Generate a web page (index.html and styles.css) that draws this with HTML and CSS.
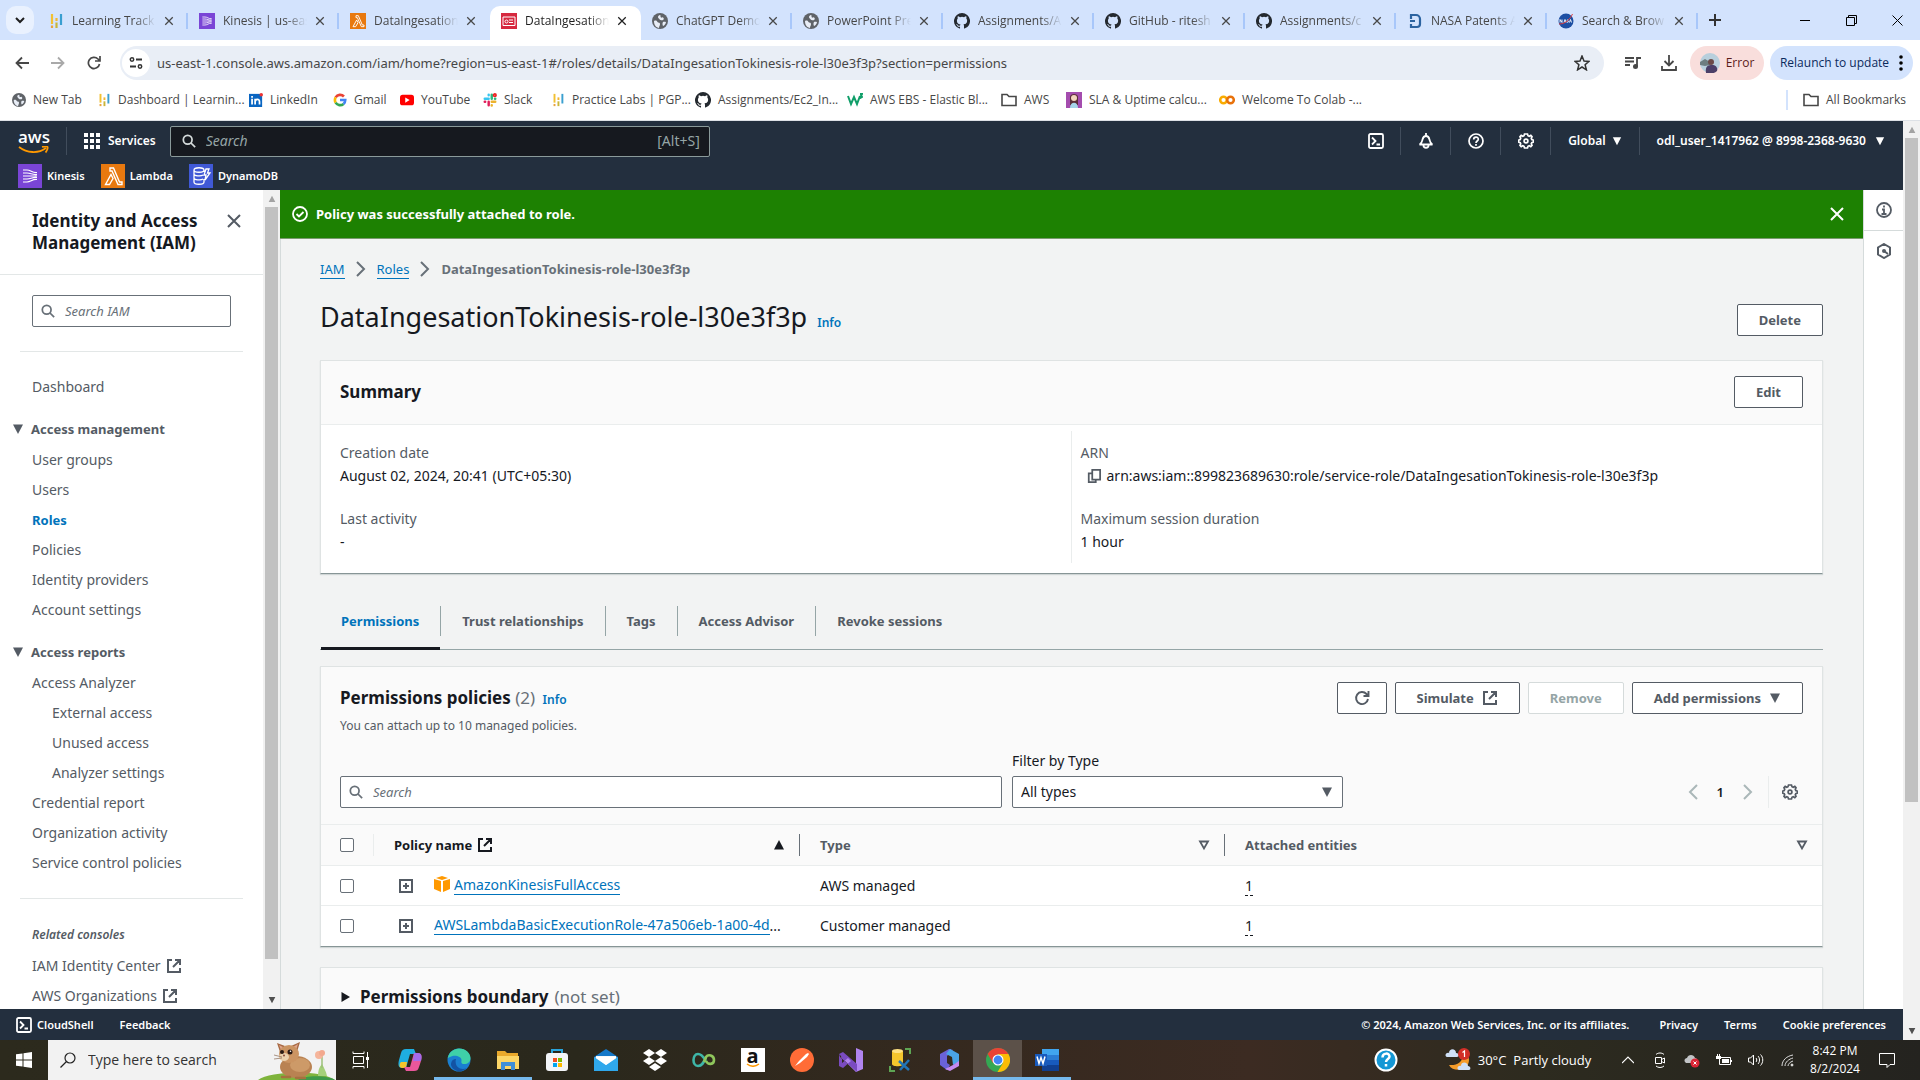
FILE: index.html
```html
<!DOCTYPE html>
<html lang="en">
<head>
<meta charset="utf-8">
<meta name="viewport" content="width=device-width, initial-scale=1">
<title>DataIngesationTokinesis-role-l30e3f3p | IAM</title>
<link rel="stylesheet" href="styles.css">
</head>
<body>
<svg class="sprite" aria-hidden="true">
  <symbol id="x" viewBox="0 0 16 16"><path d="M2 2l12 12M14 2L2 14" fill="none" stroke="currentColor" stroke-width="2"/></symbol>
  <symbol id="search" viewBox="0 0 16 16"><circle cx="6.5" cy="6.5" r="5" fill="none" stroke="currentColor" stroke-width="2"/><path d="M10 10l5 5" stroke="currentColor" stroke-width="2"/></symbol>
  <symbol id="down" viewBox="0 0 12 12"><path d="M1 1.500h10L6 11z" fill="currentColor"/></symbol>
  <symbol id="downo" viewBox="0 0 12 12"><path d="M2 2.500h8L6 9.500z" fill="none" stroke="currentColor" stroke-width="1.800"/></symbol>
  <symbol id="up" viewBox="0 0 12 12"><path d="M1 10.500h10L6 1z" fill="currentColor"/></symbol>
  <symbol id="right" viewBox="0 0 12 12"><path d="M1.500 1v10L10 6z" fill="currentColor"/></symbol>
  <symbol id="chev" viewBox="0 0 16 16"><path d="M4 1l7 7-7 7" fill="none" stroke="currentColor" stroke-width="2"/></symbol>
  <symbol id="ext" viewBox="0 0 16 16"><path d="M6 2H2v12h12v-4M9 2h5v5M14 2L7 9" fill="none" stroke="currentColor" stroke-width="2"/></symbol>
  <symbol id="gear" viewBox="0 0 16 16"><path d="M6.500 1h3l.5 1.700 1.200.5 1.600-.8 1.200 1.300-.7 1.600.5 1.200 1.700.6v1.900l-1.700.6-.5 1.200.7 1.500-1.200 1.300-1.600-.8-1.200.5-.5 1.700h-3L6 13.300l-1.200-.5-1.600.8L2 12.300l.7-1.500-.5-1.200L.500 9V7.100l1.700-.6.5-1.200L2 3.700l1.200-1.300 1.600.8L6 2.700z" fill="none" stroke="currentColor" stroke-width="1.700"/><circle cx="8" cy="8" r="1.900" fill="none" stroke="currentColor" stroke-width="1.700"/></symbol>
  <symbol id="shell" viewBox="0 0 16 16"><rect x="1" y="1" width="14" height="14" rx="1.500" fill="none" stroke="currentColor" stroke-width="1.800"/><path d="M4 4.500L7.500 8 4 11.500M8.500 11.500H12" fill="none" stroke="currentColor" stroke-width="1.800"/></symbol>
  <symbol id="plusbox" viewBox="0 0 16 16"><path d="M2 2h12v12H2zM8 5v6M5 8h6" fill="none" stroke="currentColor" stroke-width="2"/></symbol>
  <symbol id="globe" viewBox="0 0 16 16"><circle cx="8" cy="8" r="8" fill="#5f6368"/><path d="M2 8c2-1 3 0 3.500 1S8 9 8 11s-1 2-1 4C3 14 2 11 2 8zM8 2c1 0 0 2 1 2.500s1-.5 2 0 1 2 0 2.500-3 0-3.500-.8S6 5 6 4s1-2 2-2zM11 9c1-.5 2 0 3 0-.3 2-1.500 3.500-3 4-.5-1-.8-3 0-4z" fill="#e8edf6"/></symbol>
  <symbol id="gh" viewBox="0 0 16 16"><path fill="#24292f" d="M8 0a8 8 0 0 0-2.530 15.590c.4.070.55-.17.55-.38v-1.490c-2.230.48-2.700-.95-2.700-.95-.36-.92-.89-1.170-.89-1.170-.73-.5.050-.49.050-.49.810.060 1.230.83 1.230.83.720 1.230 1.880.87 2.340.67.070-.52.280-.88.510-1.080-1.780-.2-3.640-.89-3.640-3.950 0-.87.310-1.590.82-2.150-.08-.2-.36-1.010.080-2.120 0 0 .67-.21 2.200.82a7.600 7.600 0 0 1 4 0c1.530-1.030 2.200-.82 2.200-.82.440 1.110.160 1.920.080 2.120.51.560.82 1.280.82 2.150 0 3.070-1.870 3.750-3.650 3.950.29.250.54.730.54 1.480v2.200c0 .21.150.46.550.38A8 8 0 0 0 8 0z"/></symbol>
  <symbol id="bars" viewBox="0 0 16 16"><path d="M4 1v10" stroke="#f2c132" stroke-width="2.200"/><path d="M8.500 5v3" stroke="#f2b632" stroke-width="2.200"/><path d="M8.500 9.500V15" stroke="#c9b53a" stroke-width="2.200"/><path d="M4 12.500V15" stroke="#e8a33d" stroke-width="2.200"/><path d="M13 1v11" stroke="#3a9fd0" stroke-width="2.200"/></symbol>
  <symbol id="kin" viewBox="0 0 24 24"><rect width="24" height="24" fill="#7a45d6"/><path d="M5 6h4c4 0 5 3 10 2.500M5 9h4c4 0 5 2 10 1.500M5 12h14M5 15h4c4 0 5-2 10-1.500M5 18h4c4 0 5-3 10-2.500" fill="none" stroke="#fff" stroke-width="1.200"/></symbol>
  <symbol id="lam" viewBox="0 0 24 24"><rect width="24" height="24" fill="#e8790f"/><path d="M9 4h3.500l6 14H21v2.500h-4L11 7H9zM10 10.500l2 4L8.500 20.500H4.500z" fill="none" stroke="#fff" stroke-width="1.400"/></symbol>
  <symbol id="dyn" viewBox="0 0 24 24"><rect width="24" height="24" fill="#4059d6"/><path d="M5 6v12c0 3 10 3 10 0v-3M15 8V6c0-3-10-3-10 0s10 3 10 0M5 10c0 2 7 2.500 9 1M5 14c0 2 7 2.500 9 1M17 5h3l-1.500 4H21l-5 7 1-5h-2z" fill="none" stroke="#fff" stroke-width="1.300"/></symbol>
  <symbol id="iam" viewBox="0 0 16 16"><rect width="16" height="16" fill="#d6293f"/><path d="M2 4h12v8.500H2zM8 7h4M8 9.500h4" fill="none" stroke="#fff" stroke-width="1"/><circle cx="5.500" cy="8.500" r="1.500" fill="none" stroke="#fff"/></symbol>
  <symbol id="folder" viewBox="0 0 16 16"><path d="M1 13.500v-11h5l2 2h7v9z" fill="none" stroke="#474747" stroke-width="1.600"/></symbol>
</svg>

<header class="tabstrip">
  <button class="tabsearch" aria-label="Search tabs"><svg width="12" height="12" viewBox="0 0 12 12"><path d="M2 4l4 4 4-4" fill="none" stroke="#1f1f1f" stroke-width="2"/></svg></button>
  <div class="tab"><svg class="i16"><use href="#bars"/></svg><span>Learning Track</span><button aria-label="Close tab"><svg class="i9"><use href="#x"/></svg></button></div>
  <div class="tab"><svg class="i16"><use href="#kin"/></svg><span>Kinesis | us-eas</span><button aria-label="Close tab"><svg class="i9"><use href="#x"/></svg></button></div>
  <div class="tab before"><svg class="i16"><use href="#lam"/></svg><span>DataIngesation</span><button aria-label="Close tab"><svg class="i9"><use href="#x"/></svg></button></div>
  <div class="tab active"><svg class="i16"><use href="#iam"/></svg><span>DataIngesation</span><button aria-label="Close tab"><svg class="i9"><use href="#x"/></svg></button></div>
  <div class="tab"><svg class="i16"><use href="#globe"/></svg><span>ChatGPT Demo</span><button aria-label="Close tab"><svg class="i9"><use href="#x"/></svg></button></div>
  <div class="tab"><svg class="i16"><use href="#globe"/></svg><span>PowerPoint Pre</span><button aria-label="Close tab"><svg class="i9"><use href="#x"/></svg></button></div>
  <div class="tab"><svg class="i16"><use href="#gh"/></svg><span>Assignments/A</span><button aria-label="Close tab"><svg class="i9"><use href="#x"/></svg></button></div>
  <div class="tab"><svg class="i16"><use href="#gh"/></svg><span>GitHub - ritesh</span><button aria-label="Close tab"><svg class="i9"><use href="#x"/></svg></button></div>
  <div class="tab"><svg class="i16"><use href="#gh"/></svg><span>Assignments/c</span><button aria-label="Close tab"><svg class="i9"><use href="#x"/></svg></button></div>
  <div class="tab"><svg class="i16" viewBox="0 0 16 16"><path d="M4 6V2h5a4 4 0 0 1 4 4v5a3 3 0 0 1-3 3H4v-3M3 8h5" fill="none" stroke="#2b63a0" stroke-width="2.200"/></svg><span>NASA Patents A</span><button aria-label="Close tab"><svg class="i9"><use href="#x"/></svg></button></div>
  <div class="tab"><svg class="i16" viewBox="0 0 16 16"><circle cx="8" cy="8" r="7.500" fill="#1d4fa3"/><path d="M2 9.500V6.500l2 3v-3M6 9.500l1-3 1 3M10.500 6.700c-2 0-1.500 1.300-.6 1.300s1 1.500-.8 1.300M11.500 9.500l1-3 1 3" fill="none" stroke="#fff" stroke-width=".9"/><path d="M1 11C8 11 12 6 14.500 1" fill="none" stroke="#e03c3c" stroke-width="1"/></svg><span>Search &amp; Brow</span><button aria-label="Close tab"><svg class="i9"><use href="#x"/></svg></button></div>
  <button class="newtab" aria-label="New tab"><svg width="12" height="12" viewBox="0 0 12 12"><path d="M6 0v12M0 6h12" stroke="#333" stroke-width="2"/></svg></button>
  <div class="winctl">
    <button aria-label="Minimize"><svg width="10" height="10"><path d="M0 5.500h10" stroke="#000"/></svg></button>
    <button aria-label="Restore"><svg width="11" height="11"><path d="M.5 2.500h8v8h-8zM2.500 2.500v-2h8v8h-2" fill="none" stroke="#000"/></svg></button>
    <button aria-label="Close"><svg width="11" height="11"><path d="M.5.500l10 10M10.500.500l-10 10" stroke="#000"/></svg></button>
  </div>
</header>

<div class="toolbar">
  <button aria-label="Back"><svg width="14" height="14" viewBox="0 0 14 14"><path d="M14 7H2M7 1.500L1.500 7 7 12.500" fill="none" stroke="#474747" stroke-width="1.800"/></svg></button>
  <button aria-label="Forward"><svg width="14" height="14" viewBox="0 0 14 14"><path d="M0 7h12M7 1.500L12.500 7 7 12.500" fill="none" stroke="#a9a9a9" stroke-width="1.800"/></svg></button>
  <button aria-label="Reload"><svg width="14" height="14" viewBox="0 0 14 14"><path d="M12.500 8A5.600 5.600 0 1 1 11 3l1.500 1.500M13 0v5H8" fill="none" stroke="#474747" stroke-width="1.700"/></svg></button>
  <div class="omnibox">
    <span class="tune"><svg width="14" height="12" viewBox="0 0 14 12"><circle cx="3" cy="2.500" r="1.700" fill="none" stroke="#333" stroke-width="1.500"/><circle cx="11" cy="9.500" r="1.700" fill="none" stroke="#333" stroke-width="1.500"/><path d="M7 2.500h6M1 9.500h6" stroke="#333" stroke-width="1.800"/></svg></span>
    <input type="text" aria-label="Address" value="us-east-1.console.aws.amazon.com/iam/home?region=us-east-1#/roles/details/DataIngesationTokinesis-role-l30e3f3p?section=permissions">
    <button aria-label="Bookmark"><svg width="16" height="16" viewBox="0 0 16 16"><path d="M8 1l2 5 5 .4-3.900 3.300 1.300 5.100L8 12l-4.400 2.800 1.300-5.100L1 6.400 6 6z" fill="none" stroke="#333" stroke-width="1.500"/></svg></button>
  </div>
  <div class="tools">
    <button aria-label="Media"><svg width="16" height="14" viewBox="0 0 16 14"><path d="M0 2h9M0 5.500h9M0 9h5M12 11V2h4" fill="none" stroke="#474747" stroke-width="1.800"/><circle cx="10.500" cy="10.500" r="2.500" fill="#474747"/></svg></button>
    <button aria-label="Downloads"><svg width="16" height="16" viewBox="0 0 16 16"><path d="M8 0v10M3.500 6L8 10.500 12.500 6M1 11v4h14v-4" fill="none" stroke="#474747" stroke-width="1.800"/></svg></button>
    <button class="pill error"><svg width="20" height="20" viewBox="0 0 20 20"><circle cx="10" cy="10" r="10" fill="#b8cfdc"/><path d="M0 9l5-3 5 3v3l-5 1-5-1z" fill="#6d7d80"/><path d="M6 20c-1-7 2-8 6-8s6 3 5 6c-3 3-8 3-11 2z" fill="#4b3f68"/><circle cx="11" cy="9" r="3" fill="#6b4a48"/></svg>Error</button>
    <button class="pill update">Relaunch to update<svg width="4" height="16" viewBox="0 0 4 16"><circle cx="2" cy="2" r="1.800"/><circle cx="2" cy="8" r="1.800"/><circle cx="2" cy="14" r="1.800"/></svg></button>
  </div>
</div>

<nav class="bookmarks" aria-label="Bookmarks">
  <a href="#"><svg class="i14"><use href="#globe"/></svg>New Tab</a>
  <a href="#"><svg class="i14"><use href="#bars"/></svg>Dashboard | Learnin...</a>
  <a href="#"><svg class="i14" viewBox="0 0 16 16"><path d="M0 1h15v15H0z" fill="#0a66c2"/><path d="M3.500 6.500V13M7 13V6.500M7 10c0-3 5-4 5 0v3" fill="none" stroke="#fff" stroke-width="2"/><path d="M2.500 3.500h2v2h-2z" fill="#fff"/><circle cx="14" cy="2" r="2" fill="#e33"/></svg>LinkedIn</a>
  <a href="#"><svg class="i14" viewBox="0 0 16 16" fill="none" stroke-width="3"><path d="M12.500 4A6 6 0 0 0 3 5" stroke="#ea4335"/><path d="M3 5a6.200 6.200 0 0 0 0 6" stroke="#fbbc05"/><path d="M3 11a6 6 0 0 0 9 1.500" stroke="#34a853"/><path d="M8 8h6a6 6 0 0 1-2 4.500" stroke="#4285f4"/></svg>Gmail</a>
  <a href="#"><svg class="i14" viewBox="0 0 16 16"><rect y="2" width="16" height="12" rx="3" fill="red"/><path d="M6 5l5 3-5 3z" fill="#fff"/></svg>YouTube</a>
  <a href="#"><svg class="i14" viewBox="0 0 16 16" fill="none" stroke-width="2.800" stroke-linecap="round"><path d="M2 6.500h4.500M6.500 2v.5" stroke="#36c5f0"/><path d="M10 2v4.500M13.700 6.500h.3" stroke="#2eb67d"/><path d="M10 10h4M10 14v.2" stroke="#ecb22e"/><path d="M6.500 10v4M2 10h.5" stroke="#e01e5a"/><circle cx="13.500" cy="2.500" r="1" stroke="#e22"/></svg>Slack</a>
  <a href="#"><svg class="i14"><use href="#bars"/></svg>Practice Labs | PGP...</a>
  <a href="#"><svg class="i16"><use href="#gh"/></svg>Assignments/Ec2_In...</a>
  <a href="#"><svg class="i16" viewBox="0 0 16 16"><path d="M1 4l3 8 3-7 3 7 3-8M13 2h2l-1 2 1 1-2 1" fill="none" stroke="#109e69" stroke-width="2"/></svg>AWS EBS - Elastic Bl...</a>
  <a href="#"><svg class="i16"><use href="#folder"/></svg>AWS</a>
  <a href="#"><svg class="i16" viewBox="0 0 16 16"><path d="M0 0h16v16H0z" fill="#a44cae"/><path d="M4 13V5c0-4 8-4 8 0v8z" fill="#5c2f38"/><circle cx="8" cy="6" r="3" fill="#f3d5bd"/><path d="M4 16c0-7 8-7 8 0z" fill="#a6d5e8"/></svg>SLA &amp; Uptime calcu...</a>
  <a href="#"><svg class="i16" viewBox="0 0 16 16" fill="none" stroke-width="2.500"><circle cx="4.500" cy="8" r="3.300" stroke="#f9ab00"/><circle cx="11.500" cy="8" r="3.300" stroke="#e8710a"/></svg>Welcome To Colab -...</a>
  <a href="#" class="allbm"><svg class="i16"><use href="#folder"/></svg>All Bookmarks</a>
</nav>

<div class="page">
  <div class="console">
    <header class="awsnav">
      <a href="#" class="awslogo" aria-label="AWS home"><span>aws</span><svg width="31" height="8" viewBox="0 0 31 8"><path d="M1 1c8 6 19 7 27 1M24 1c2-.5 5-1 5.500 0S29 5 27.500 6.500" fill="none" stroke="#f90" stroke-width="1.800"/></svg></a>
      <button class="services"><svg width="16" height="16" viewBox="0 0 16 16"><path d="M0 2h4m2 0h4m2 0h4M0 8h4m2 0h4m2 0h4M0 14h4m2 0h4m2 0h4" stroke="#fff" stroke-width="4"/></svg>Services</button>
      <div class="awssearch"><svg class="i14"><use href="#search"/></svg><input type="search" aria-label="Search services" placeholder="Search"><span>[Alt+S]</span></div>
      <div class="navright">
        <button aria-label="CloudShell"><svg class="i16"><use href="#shell"/></svg></button>
        <button aria-label="Notifications"><svg class="i16" viewBox="0 0 16 16"><path d="M8 0v3M1.500 11.500c2.500-1 2.500-3 3-5S6 3 8 3s3 1.500 3.500 3.500.5 4 3 5zM5.500 12.500c0 3 5 3 5 0" fill="none" stroke="#fff" stroke-width="1.800"/></svg></button>
        <button aria-label="Help"><svg class="i16" viewBox="0 0 16 16"><circle cx="8" cy="8" r="7" fill="none" stroke="#fff" stroke-width="1.700"/><path d="M5.700 6.500c0-3 4.600-3 4.600-.3C10.300 8 8 8 8 10M8 11v1.800" fill="none" stroke="#fff" stroke-width="1.700"/></svg></button>
        <button aria-label="Settings"><svg class="i16"><use href="#gear"/></svg></button>
        <button class="txt">Global<svg class="i9"><use href="#down"/></svg></button>
        <button class="txt user">odl_user_1417962 @ 8998-2368-9630<svg class="i9"><use href="#down"/></svg></button>
      </div>
    </header>
    <nav class="favs" aria-label="Favorites">
      <a href="#"><svg class="i24"><use href="#kin"/></svg>Kinesis</a>
      <a href="#"><svg class="i24"><use href="#lam"/></svg>Lambda</a>
      <a href="#"><svg class="i24"><use href="#dyn"/></svg>DynamoDB</a>
    </nav>

    <div class="body">
      <aside class="sidebar">
        <div class="sidehead"><h2>Identity and Access Management (IAM)</h2><button aria-label="Close navigation"><svg class="i16"><use href="#x"/></svg></button></div>
        <div class="sidesearch field"><svg class="i14"><use href="#search"/></svg><input type="search" aria-label="Search IAM" placeholder="Search IAM"></div>
        <hr>
        <a href="#" class="dash">Dashboard</a>
        <h3><svg class="i10"><use href="#down"/></svg>Access management</h3>
        <ul>
          <li><a href="#">User groups</a></li><li><a href="#">Users</a></li><li><a href="#" class="cur">Roles</a></li><li><a href="#">Policies</a></li><li><a href="#">Identity providers</a></li><li><a href="#">Account settings</a></li>
        </ul>
        <h3><svg class="i10"><use href="#down"/></svg>Access reports</h3>
        <ul>
          <li><a href="#">Access Analyzer</a></li><li class="sub"><a href="#">External access</a></li><li class="sub"><a href="#">Unused access</a></li><li class="sub"><a href="#">Analyzer settings</a></li><li><a href="#">Credential report</a></li><li><a href="#">Organization activity</a></li><li><a href="#">Service control policies</a></li>
        </ul>
        <hr>
        <h4>Related consoles</h4>
        <ul>
          <li><a href="#">IAM Identity Center <svg class="i16"><use href="#ext"/></svg></a></li><li><a href="#">AWS Organizations <svg class="i16"><use href="#ext"/></svg></a></li>
        </ul>
      </aside>
      <div class="sbar side"><svg class="i8"><use href="#up"/></svg><i class="thumb"></i><svg class="i8 dark"><use href="#down"/></svg></div>

      <main>
        <div class="flash" role="status"><svg class="i16" viewBox="0 0 16 16"><circle cx="8" cy="8" r="7" fill="none" stroke="#fff" stroke-width="1.800"/><path d="M4.500 8l2.500 2.500 4.500-4.500" fill="none" stroke="#fff" stroke-width="1.800"/></svg><span>Policy was successfully attached to role.</span><button aria-label="Dismiss"><svg class="i16"><use href="#x"/></svg></button></div>
        <div class="content">
          <nav class="crumbs" aria-label="Breadcrumb"><a href="#">IAM</a><svg class="i16"><use href="#chev"/></svg><a href="#">Roles</a><svg class="i16"><use href="#chev"/></svg><b>DataIngesationTokinesis-role-l30e3f3p</b></nav>
          <div class="titlebar"><h1>DataIngesationTokinesis-role-l30e3f3p</h1><a href="#" class="info">Info</a><button class="btn">Delete</button></div>

          <section class="card">
            <div class="cardhead"><h2>Summary</h2><button class="btn">Edit</button></div>
            <div class="kv">
              <dl><dt>Creation date</dt><dd>August 02, 2024, 20:41 (UTC+05:30)</dd><dt>Last activity</dt><dd>-</dd></dl>
              <dl><dt>ARN</dt><dd class="arn"><svg class="i14" viewBox="0 0 16 16"><path d="M6 1h9v11H6zM5 5H2v10h8v-3" fill="none" stroke="#545b64" stroke-width="2"/></svg>arn:aws:iam::899823689630:role/service-role/DataIngesationTokinesis-role-l30e3f3p</dd><dt>Maximum session duration</dt><dd>1 hour</dd></dl>
            </div>
          </section>

          <div class="ptabs" role="tablist">
            <button role="tab" aria-selected="true">Permissions</button><button role="tab">Trust relationships</button><button role="tab">Tags</button><button role="tab">Access Advisor</button><button role="tab">Revoke sessions</button>
          </div>

          <section class="card">
            <div class="polhead">
              <div><h2>Permissions policies <span>(2)</span> <a href="#" class="info">Info</a></h2><p>You can attach up to 10 managed policies.</p></div>
              <div class="actions">
                <button class="btn icon" aria-label="Refresh"><svg class="i16" viewBox="0 0 16 16"><path d="M14 9A6 6 0 1 1 12.500 4L14 5.500M14.500 1v5h-5" fill="none" stroke="currentColor" stroke-width="1.900"/></svg></button>
                <button class="btn">Simulate<svg class="i16"><use href="#ext"/></svg></button>
                <button class="btn" disabled>Remove</button>
                <button class="btn">Add permissions<svg class="i12"><use href="#down"/></svg></button>
              </div>
            </div>
            <div class="filters">
              <div class="field"><svg class="i14"><use href="#search"/></svg><input type="search" aria-label="Search policies" placeholder="Search"></div>
              <div class="type"><label for="ptype">Filter by Type</label><div class="selwrap"><select id="ptype"><option>All types</option></select><svg class="i12"><use href="#down"/></svg></div></div>
              <div class="pager"><button aria-label="Previous page"><svg class="i16 flip"><use href="#chev"/></svg></button><b>1</b><button aria-label="Next page"><svg class="i16"><use href="#chev"/></svg></button><button class="prefs" aria-label="Preferences"><svg class="i16"><use href="#gear"/></svg></button></div>
            </div>
            <table>
              <colgroup><col class="c1"><col class="c2"><col class="c3"><col></colgroup>
              <thead><tr>
                <th><div class="selall"><input type="checkbox" aria-label="Select all"></div></th>
                <th class="sorted"><div>Policy name <svg class="i16"><use href="#ext"/></svg><svg class="i12 end"><use href="#up"/></svg></div></th>
                <th><div>Type<svg class="i12 end"><use href="#downo"/></svg></div></th>
                <th><div>Attached entities<svg class="i12 end"><use href="#downo"/></svg></div></th>
              </tr></thead>
              <tbody>
                <tr><td><input type="checkbox" aria-label="Select AmazonKinesisFullAccess"></td><td><div class="pol"><svg class="i16"><use href="#plusbox"/></svg><span><svg class="i16 box" viewBox="0 0 16 16"><path d="M0 3l7 2v11l-7-3zM16 3L9 5v11l7-3zM8 0l6 2-6 2-6-2z" fill="#f90"/></svg><a href="#">AmazonKinesisFullAccess</a></span></div></td><td>AWS managed</td><td><span class="num">1</span></td></tr>
                <tr><td><input type="checkbox" aria-label="Select AWSLambdaBasicExecutionRole"></td><td><div class="pol"><svg class="i16"><use href="#plusbox"/></svg><span><a href="#">AWSLambdaBasicExecutionRole-47a506eb-1a00-4d</a>...</span></div></td><td>Customer managed</td><td><span class="num">1</span></td></tr>
              </tbody>
            </table>
          </section>

          <section class="card boundary"><h2><svg class="i12"><use href="#right"/></svg>Permissions boundary <span>(not set)</span></h2></section>
        </div>
      </main>
      <aside class="rail">
        <button aria-label="Info panel"><svg class="i16" viewBox="0 0 16 16"><circle cx="8" cy="8" r="7" fill="none" stroke="#545b64" stroke-width="1.800"/><path d="M8 3.500v2M6 7.500h2V12M5.500 12h5" fill="none" stroke="#545b64" stroke-width="1.800"/></svg></button>
        <button aria-label="Tutorials"><svg class="i16" viewBox="0 0 16 16"><path d="M8 1l6 3.500v7L8 15l-6-3.500v-7zM8 8l4 3" fill="none" stroke="#545b64" stroke-width="2"/><circle cx="8" cy="8" r="2" fill="#545b64"/></svg></button>
      </aside>
    </div>

    <footer class="awsfoot">
      <a href="#" class="cs"><svg class="i16"><use href="#shell"/></svg>CloudShell</a><a href="#">Feedback</a>
      <span>© 2024, Amazon Web Services, Inc. or its affiliates.</span><a href="#">Privacy</a><a href="#">Terms</a><a href="#">Cookie preferences</a>
    </footer>
  </div>
  <div class="sbar main"><svg class="i8"><use href="#up"/></svg><i class="thumb"></i><svg class="i8 dark"><use href="#down"/></svg></div>
</div>

<footer class="taskbar">
  <button class="start" aria-label="Start"><svg width="16" height="16" viewBox="0 0 16 16"><path d="M0 2.300l6.500-.9v6.100H0zM7.500 1.200L16 0v7.500H7.500zM0 8.500h6.500v6.100L0 13.700zM7.500 8.500H16V16l-8.500-1.200z" fill="#fff"/></svg></button>
  <div class="winsearch"><svg class="i16" viewBox="0 0 16 16"><circle cx="10" cy="6" r="5" fill="none" stroke="#222" stroke-width="1.200"/><path d="M6.500 9.500L.5 15.500" stroke="#222" stroke-width="1.200"/></svg><input type="search" aria-label="Type here to search" placeholder="Type here to search">
    <svg width="78" height="38" viewBox="0 0 78 38"><path d="M0 38c12-9 62-11 77 0z" fill="#7fb43c"/><path d="M40 38c6-5 30-5 37 0z" fill="#3f9a4a"/><path d="M60 34c0-5 1-9 4-12 2 4 4 7 5 12z" fill="#a5d07a"/><path d="M64 26V14" stroke="#9cc07a" stroke-width="1.500"/><circle cx="61" cy="13" r="4" fill="#f5b59b"/><circle cx="64" cy="11" r="3" fill="#f3a98e"/><ellipse cx="38" cy="25" rx="16" ry="11" fill="#b98252"/><ellipse cx="42" cy="23" rx="10" ry="7" fill="#cd9a68"/><path d="M19 1l8 3-5 6zM42 0l-9 4 6 6z" fill="#a86a44"/><path d="M21 3l4 2-2 3zM40 2l-5 3 3 3z" fill="#dfa58a"/><ellipse cx="31" cy="12" rx="10" ry="9" fill="#cb9462"/><ellipse cx="26" cy="15" rx="5" ry="4" fill="#ecd2ae"/><circle cx="32" cy="10" r="2.500" fill="#2a1a14"/><circle cx="24" cy="10" r="2" fill="#2a1a14"/><circle cx="32.500" cy="9.200" r=".8" fill="#fff"/><circle cx="26" cy="13.500" r="1" fill="#8a4a3a"/><path d="M24 15l-8-2M24 16l-8 1" stroke="#8b6a55" stroke-width=".7"/><path d="M24 35h8M38 36h9" stroke="#a5713f" stroke-width="2.500" stroke-linecap="round"/></svg></div>
  <button aria-label="Task view"><svg width="18" height="18" viewBox="0 0 18 18" fill="none" stroke="#fff"><path d="M1.500 5.500h10v7h-10zM1 .500v2h11v-2M1 17.500v-2h11v2M15.500 1v16"/><path d="M14 6h3v3h-3z" fill="#fff" stroke="none"/></svg></button>
  <button aria-label="Copilot"><svg class="i24" viewBox="0 0 24 24"><path d="M8 1h8l2 5h-6L8 20H4c-4 0-4-4-3-8l2-7c1-3 2-4 5-4z" fill="#1eaee0"/><path d="M3 14h6l-1 6H4c-3 0-3-4-1-6z" fill="#f4c52c"/><path d="M16 23H8l-2-4h6l4-14h4c4 0 4 4 3 8l-2 6c-1 3-2 4-5 4z" fill="#e9579b"/><path d="M16 5h4c4 0 4 4 3 8h-8z" fill="#a46bea"/></svg></button>
  <button class="run" aria-label="Edge"><svg class="i24" viewBox="0 0 24 24"><circle cx="12" cy="12" r="11.500" fill="#1a7fd0"/><path d="M.8 10C2 4 7 .5 12 .500c7 0 11.500 5 11.500 9.500 0 4-3 6-6 6-4 0-3-2-3-4 0-3-5-5-9-4-3 .8-4 2-4.700 2z" fill="#3fd0a8"/><path d="M9 11c-2 7 4 12 11 9-5 5-14 4-16-3 0-4 2-6 5-6z" fill="#1353a3"/></svg></button>
  <button class="run" aria-label="File Explorer"><svg class="i24" viewBox="0 0 24 24"><path d="M1 3h8l2 2h11v16H1z" fill="#e9a92c"/><path d="M1 8h22v13H1z" fill="#fcd667"/><path d="M5 14h14v8h-4v-4H9v4H5z" fill="#3f8fd8"/></svg></button>
  <button aria-label="Store"><svg class="i24" viewBox="0 0 24 24"><path d="M7 6V2h10v4" fill="none" stroke="#2aa5dc" stroke-width="2"/><rect x="1" y="5" width="22" height="18" rx="3" fill="#f3f5f8"/><path d="M8 10h4v4H8z" fill="#f25022"/><path d="M13 10h4v4h-4z" fill="#7fba00"/><path d="M8 15h4v4H8z" fill="#00a4ef"/><path d="M13 15h4v4h-4z" fill="#ffb900"/></svg></button>
  <button aria-label="Mail"><svg class="i24" viewBox="0 0 24 24"><path d="M0 9l12-8 12 8v14H0z" fill="#1478c9"/><path d="M2 8h20v7l-10 3L2 15z" fill="#f5f8fa"/><path d="M0 9l12 8 12-8v14H0z" fill="#2fa8ec"/><path d="M1 9h22l-11 8z" fill="#fff"/></svg></button>
  <button aria-label="Dropbox"><svg class="i24" viewBox="0 0 24 24" fill="#fff"><path d="M6 1l6 4-6 4-6-4zM18 1l6 4-6 4-6-4zM6 9l6 4-6 4-6-4zM18 9l6 4-6 4-6-4zM12 15l6 4-6 4-6-4z"/></svg></button>
  <button aria-label="Infinity"><svg class="i24" viewBox="0 0 24 24" fill="none" stroke-width="2.600"><path d="M14 9c-2 4-3 9-8 9-6 0-6-12 0-12 4 0 6 4 8 7" stroke="#3eb6a8"/><path d="M14 13c2 4 8 4 8-1s-6-6-8-3l-2 5" stroke="#8fc65c"/></svg></button>
  <button aria-label="Amazon"><span class="amz">a<svg width="14" height="4" viewBox="0 0 14 4"><path d="M1 1c4 3 8 3 12 0" fill="none" stroke="#f90" stroke-width="1.500"/></svg></span></button>
  <button aria-label="Postman"><svg class="i24" viewBox="0 0 24 24"><circle cx="12" cy="12" r="12" fill="#ff6c37"/><path d="M5 18l4-5 7-7 2-1 1 1-2 3-7 6z" fill="#fff"/></svg></button>
  <button aria-label="Visual Studio"><svg class="i24" viewBox="0 0 24 24"><path d="M17 0l7 3v18l-7 3L2 9l3-3 12 10z" fill="#b184f0"/><path d="M0 6l4-2 14 12v8L1 9zM0 6v12l4 2 8-7-3-3-6 5V9z" fill="#7a4bc0"/></svg></button>
  <button aria-label="SQL Server"><svg class="i24" viewBox="0 0 24 24"><path d="M4 3v13c0 3 11 3 11 0V3z" fill="#f5c52d"/><ellipse cx="9.500" cy="3" rx="5.500" ry="2" fill="#ffe182"/><path d="M17 1h5v5M2 18v5h5" fill="none" stroke="#5ea553" stroke-width="2"/><path d="M11 13l10 9M21 12l-9 10" stroke="#2274b5" stroke-width="2.500"/></svg></button>
  <button aria-label="Microsoft 365"><svg class="i24" viewBox="0 0 24 24"><path d="M12 1L3 6v11l7 5 3-5-3-2V8l6-6z" fill="#6a62d8"/><path d="M13 1l9 5v8l-6 3-1-8-6-3z" fill="#4aa4e8"/><path d="M22 13v5l-9 5-5-2 8-4z" fill="#c48af0"/></svg></button>
  <button class="run on" aria-label="Chrome"><svg class="i24" viewBox="0 0 24 24"><circle cx="12" cy="12" r="12" fill="#34a853"/><path d="M1.600 6A12 12 0 0 1 22.400 6H12l-5 9z" fill="#ea4335"/><path d="M22.400 6A12 12 0 0 1 11.500 24L17 15l-5-9z" fill="#fbbc05"/><circle cx="12" cy="12" r="5.500" fill="#fff"/><circle cx="12" cy="12" r="4.400" fill="#4285f4"/></svg></button>
  <button class="run" aria-label="Word"><svg class="i24" viewBox="0 0 24 24"><path d="M7 1h17v6H7z" fill="#41a5ee"/><path d="M7 7h17v5H7z" fill="#2b7cd3"/><path d="M7 12h17v5H7z" fill="#185abd"/><path d="M7 17h17v6H7z" fill="#103f91"/><path d="M0 6h12v12H0z" fill="#185abd"/><path d="M2 8.500l2 7 2-6 2 6 2-7" fill="none" stroke="#fff" stroke-width="1.500"/></svg></button>
  <div class="tray">
    <button aria-label="Get help"><svg width="24" height="24" viewBox="0 0 24 24"><circle cx="12" cy="12" r="10.500" fill="#1597d5" stroke="#fff" stroke-width="2"/><path d="M8.500 9.500c0-5 7-5 7-1C15.500 11 12 11 12 14M12 16v2.500" fill="none" stroke="#fff" stroke-width="2.500"/></svg></button>
    <button class="weather"><svg width="26" height="24" viewBox="0 0 26 24"><path d="M16 4c4 8-2 14-12 13 4 8 20 6 20-5 0-5-4-8-8-8z" fill="#f59c2a"/><path d="M2 9c-3-1-1-5 2-4 0-5 7-5 7 0 4 0 3 4 1 4z" fill="#cfe0f7"/><path d="M14 22c-3-1-1-5 2-4 0-5 7-4 7 0 3 0 3 4 1 4z" fill="#cfe0f7"/><circle cx="19" cy="6" r="6" fill="#d22f27"/><path d="M17.500 4.500L19.500 3v6" fill="none" stroke="#fff" stroke-width="1.200"/></svg><span>30°C</span><span>Partly cloudy</span></button>
    <button aria-label="Hidden icons"><svg class="i12" viewBox="0 0 12 12"><path d="M0 9l6-6 6 6" fill="none" stroke="#fff" stroke-width="1.200"/></svg></button>
    <button aria-label="Meet now"><svg class="i16" viewBox="0 0 16 16" fill="none" stroke="#fff"><path d="M3.500 5.500h6v6h-6zM9.500 7.500l3-1.500v5l-3-1.500M4 2.500c2-2 6-2 8 0M4 14c2 2 6 2 8 0"/></svg></button>
    <button aria-label="OneDrive"><svg class="i16" viewBox="0 0 16 16"><path d="M2 11c-3-2-1-5 1-5 1-4 7-4 8 0 3 0 3 5 1 5z" fill="#c2c4c6"/><circle cx="11" cy="11" r="4.500" fill="#dc2535"/><path d="M9.500 9.500l3 3M12.500 9.500l-3 3" stroke="#fff"/></svg></button>
    <button aria-label="Battery"><svg class="i16" viewBox="0 0 16 16"><path d="M3.500 5.500h11v7h-11z" fill="none" stroke="#fff"/><path d="M6 7h7v4H6zM15 8h1v2h-1zM0 4h5v3H0zM1 2h1v2H1zM3 2h1v2H3z" fill="#fff"/></svg></button>
    <button aria-label="Volume"><svg class="i16" viewBox="0 0 16 16" fill="none" stroke="#fff"><path d="M.5 6v4h2l3 3V3l-3 3zM8 6c1 1 1 3 0 4M10 4c2 2 2 6 0 8M12.500 2.500c3 3 3 8 0 11"/></svg></button>
    <button aria-label="Network"><svg class="i16" viewBox="0 0 16 16" fill="none" stroke="#ddd"><path d="M2 14C2 8 7 4 13 3M5 14c0-4 4-7 8-8M8 14c0-2 2-4 5-5"/><circle cx="12" cy="13" r="1" fill="#fff"/></svg></button>
    <button class="clock"><span>8:42 PM</span><span>8/2/2024</span></button>
    <button class="notif" aria-label="Notifications"><svg class="i16" viewBox="0 0 16 16"><path d="M.5 1.500h15v11H11l-3 3v-3H.5z" fill="none" stroke="#fff"/></svg></button>
  </div>
</footer>
</body>
</html>
```
FILE: styles.css
```css
* { box-sizing: border-box; }
body { margin: 0; height: 100vh; display: flex; flex-direction: column; overflow: hidden; font: 14px/20px "Noto Sans", "Open Sans", sans-serif; color: #16191f; background: #fff; }
button, input, select { font: inherit; color: inherit; margin: 0; }
button { background: none; border: 0; padding: 0; display: inline-flex; align-items: center; justify-content: center; flex: none; }
a { color: inherit; text-decoration: none; }
h1, h2, h3, h4, ul, dl, dd, p { margin: 0; padding: 0; font-weight: inherit; font-size: inherit; }
ul { list-style: none; }
svg { flex: none; display: block; }
.sprite { position: absolute; width: 0; height: 0; }
.i8 { width: 8px; height: 8px; }
.i9 { width: 10px; height: 10px; }
.i10 { width: 12px; height: 12px; }
.i12 { width: 12px; height: 12px; }
.i14 { width: 14px; height: 14px; }
.i16 { width: 16px; height: 16px; }
.i24 { width: 24px; height: 24px; }

/* browser frame */
.tabstrip, .toolbar, .bookmarks { font-family: "Open Sans", sans-serif; font-size: 12px; color: #474747; flex: none; }
.tabstrip { height: 40px; display: flex; align-items: center; background: #d3e3fd; padding-left: 6px; }
.tabsearch { width: 28px; height: 28px; border-radius: 10px; background: #e9f1fe; margin-right: 3px; }
.tab { width: 151px; height: 34px; display: flex; align-items: center; gap: 8px; padding: 0 14px 4px 11px; align-self: flex-end; position: relative; }
.tab::after { content: ""; position: absolute; right: 0; top: 7px; width: 2px; height: 16px; background: #a8c7fa; }
.tab.before::after, .tab.active::after { display: none; }
.tab span { flex: 1; min-width: 0; white-space: nowrap; -webkit-mask-image: linear-gradient(90deg, #000 75%, transparent); mask-image: linear-gradient(90deg, #000 75%, transparent); }
.tab.active { background: #fff; border-radius: 10px 10px 0 0; color: #1f1f1f; }
.newtab { width: 34px; }
.winctl { margin-left: auto; display: flex; }
.winctl button { width: 46px; height: 40px; }
.toolbar { height: 44px; display: flex; align-items: center; padding: 2px 7px 0 4px; }
.toolbar > button { width: 36px; }
.omnibox { flex: 1; height: 34px; margin: 0 14px 0 8px; border-radius: 17px; background: #e9eef6; display: flex; align-items: center; gap: 7px; padding: 0 14px 0 2px; }
.tune { width: 28px; height: 28px; border-radius: 50%; background: #fff; display: grid; place-items: center; }
.omnibox input { flex: 1; border: 0; background: none; padding: 0; font: 13px/20px "Noto Sans", sans-serif; }
.tools { display: flex; align-items: center; gap: 6px; }
.tools > button:not(.pill) { width: 30px; }
.pill { height: 34px; border-radius: 17px; }
.error { width: 74px; background: #f9dedc; color: #5b1c19; gap: 6px; }
.update { width: 143px; background: #d3e3fd; color: #0b2a5c; gap: 10px; }
.bookmarks { height: 37px; border-bottom: 1px solid #dde1e6; padding: 0 0 4px 12px; display: grid; grid-template-columns: 85px 152px 84px 67px 83px 68px 144px 152px 154px 65px 153px 180px 1fr; align-items: center; white-space: nowrap; }
.bookmarks a { display: flex; align-items: center; gap: 7px; min-width: 0; }
.allbm { justify-self: end; border-left: 2px solid #d3e3fd; padding: 0 14px 0 15px; }

/* console */
.page { flex: 1; min-height: 0; display: flex; }
.console { flex: 1; min-width: 0; display: flex; flex-direction: column; }
.awsnav { height: 40px; flex: none; background: #232f3e; color: #fff; display: flex; align-items: center; font-size: 12px; font-weight: 600; padding-right: 18px; }
.awslogo { width: 67px; height: 28px; border-right: 1px solid #414d5c; padding: 2px 0 0 18px; }
.awslogo span { display: block; font: 600 17px/15px "Open Sans", sans-serif; height: 17px; }
.services { gap: 8px; padding: 0 14px 0 17px; }
.awssearch { width: 540px; height: 31px; border: 1px solid #8a9a9a; border-radius: 2px; background: #16191f; display: flex; align-items: center; gap: 10px; padding: 0 9px 0 11px; font-size: 14px; font-weight: 400; color: #95a5a6; }
.awssearch svg { color: #d5dbdb; }
.awssearch input { flex: 1; background: none; border: 0; padding: 0; }
input::placeholder { font-style: italic; color: inherit; opacity: 1; }
.navright { margin-left: auto; display: flex; align-items: center; }
.navright button { width: 50px; height: 28px; border-right: 1px solid #414d5c; }
.navright .txt { width: auto; padding: 0 17px; gap: 6px; }
.navright .user { border: 0; padding: 0 0 0 17px; gap: 9px; }
.favs { height: 29px; flex: none; background: #232f3e; color: #fff; display: flex; gap: 16px; padding: 0 18px; align-items: center; font-size: 11px; font-weight: 600; }
.favs a { display: flex; align-items: center; gap: 5px; }
.body { flex: 1; min-height: 0; display: flex; }
.sidebar { width: 263px; flex: none; overflow: hidden; color: #545b64; }
.sidehead { height: 85px; border-bottom: 1px solid #e3e7e7; padding: 20px 21px 0 32px; display: flex; justify-content: space-between; align-items: flex-start; }
.sidehead h2 { width: 180px; font: 700 17px/22px "Noto Sans", sans-serif; color: #16191f; }
.sidehead button { height: 22px; }
.field { height: 32px; border: 1px solid #687078; border-radius: 2px; background: #fff; color: #687078; display: flex; align-items: center; gap: 10px; padding: 0 8px; font-size: 13px; }
.field input { flex: 1; min-width: 0; border: 0; padding: 0; background: none; }
input:focus { outline: 0; }
.sidesearch { width: 199px; margin: 20px 0 24px 32px; }
.sidebar hr { border: 0; border-top: 1px solid #e3e7e7; margin: 0 20px; }
.dash { display: block; margin: 25px 0 0 32px; }
.sidebar h3 { display: flex; align-items: center; gap: 7px; padding-left: 12px; margin: 22px 0 6px; font-size: 13px; font-weight: 700; }
.sidebar li { height: 30px; line-height: 30px; padding-left: 32px; }
.sidebar ul { margin-bottom: -5px; }
.sidebar li.sub { padding-left: 52px; }
.sidebar li a { display: flex; align-items: center; gap: 5px; }
.sidebar .cur { color: #0073bb; font-size: 13px; font-weight: 700; }
.sidebar ul + hr { margin-top: 25px; }
.sidebar h4 { font-size: 12px; font-style: italic; font-weight: 600; margin: 26px 0 6px 32px; }
.sbar { width: 17px; flex: none; background: #f1f1f1; display: flex; flex-direction: column; align-items: center; justify-content: space-between; padding: 5px 0; color: #a3a3a3; }
.sbar .thumb { width: 13px; flex: none; background: #c1c1c1; }
.side .thumb { height: 93%; margin-bottom: auto; margin-top: 4px; }
.main .thumb { height: 73%; margin-bottom: auto; margin-top: 4px; }
.dark { color: #505050; }
main { flex: 1; min-width: 0; background: #f2f3f3; overflow: hidden; }
.flash { height: 49px; background: #1d8102; color: #fff; display: flex; align-items: center; gap: 8px; padding: 0 18px 0 12px; font-size: 13px; font-weight: 700; border-bottom: 1px solid #7a9a70; }
.flash button { margin-left: auto; }
.content { padding: 20px 40px 0 39px; border-left: 1px solid #d5dbdb; }
.crumbs { display: flex; align-items: center; gap: 8px; color: #687078; font-size: 13px; }
.crumbs a, .pol a { color: #0073bb; border-bottom: 1px solid #0073bb; line-height: 18px; }
.titlebar { display: flex; align-items: flex-start; height: 81px; padding-top: 20px; }
.titlebar h1 { font-size: 27px; line-height: 36px; }
.info { color: #0073bb; font-size: 12px; font-weight: 600; }
.titlebar .info { margin: 14px 0 0 10px; line-height: 20px; }
.titlebar .btn { margin: 5px 0 0 auto; }
.btn { height: 32px; border: 1px solid #545b64; border-radius: 2px; background: #fff; color: #545b64; font-size: 13px; font-weight: 700; padding: 0 21px; gap: 8px; }
.btn.icon { padding: 0 16px; }
.btn:disabled { border-color: #d5dbdb; color: #95a5a6; }
.card { background: #fff; border: 1px solid #dfe3e3; border-bottom-color: #879596; box-shadow: 0 1px 1px #d0d6d6; }
.card h2 { font-size: 17px; line-height: 24px; font-weight: 700; }
.card h2 span { font-weight: 400; color: #687078; }
.cardhead { height: 64px; background: #fafafa; border-bottom: 1px solid #eaeded; padding: 0 19px 2px; display: flex; justify-content: space-between; align-items: center; }
.kv { display: grid; grid-template-columns: 1fr 1fr; padding: 6px 0 10px; }
.kv dl { padding: 10px 9px 0; height: 132px; }
.kv dl:first-child { padding-left: 19px; border-right: 1px solid #eaeded; }
dt { color: #545b64; line-height: 23px; }
dd { line-height: 24px; margin: 0 0 19px; }
dd.arn { display: flex; align-items: center; gap: 6px; padding-left: 6px; white-space: nowrap; }
.ptabs { display: flex; height: 60px; margin: 16px 0; padding-top: 2px; border-bottom: 1px solid #95a5a6; align-items: center; }
.ptabs button { height: 30px; padding: 0 21px; border-right: 1px solid #95a5a6; color: #545b64; font-size: 13px; font-weight: 700; position: relative; }
.ptabs button:last-child { border: 0; }
.ptabs button:first-child { color: #0073bb; }
.ptabs button:first-child::after { content: ""; position: absolute; left: 1px; right: 0; bottom: -14px; height: 3px; background: #16191f; }
.polhead { background: #fafafa; display: flex; justify-content: space-between; padding: 15px 19px 0; }
.polhead h2 { line-height: 31px; }
.polhead p { font-size: 12px; color: #545b64; line-height: 22px; }
.polhead .info { font-weight: 600; margin-left: 3px; }
.actions { display: flex; gap: 8px; }
.filters { background: #fafafa; display: grid; grid-template-columns: 2fr 1fr 450px; align-items: end; gap: 10px; padding: 14px 19px 16px; }
.type label { display: block; line-height: 20px; margin-bottom: 5px; }
.selwrap { position: relative; }
.selwrap select { display: block; appearance: none; width: 100%; height: 32px; border: 1px solid #687078; border-radius: 2px; background: #fff; padding: 0 8px; }
.selwrap svg { position: absolute; right: 10px; top: 10px; color: #545b64; pointer-events: none; }
.pager { display: flex; justify-content: flex-end; align-items: center; height: 32px; color: #aab7b8; gap: 12px; }
.pager b { color: #16191f; font-size: 13px; font-weight: 600; padding: 0 4px; }
.pager .prefs { color: #545b64; height: 32px; border-left: 1px solid #eaeded; padding: 0 5px 0 13px; }
.flip { transform: rotate(180deg); }
table { width: 100%; border-collapse: collapse; table-layout: fixed; }
.c1 { width: 53px; }
.c2 { width: 426px; }
.c3 { width: 425px; }
th { height: 41px; background: #fafafa; border-top: 1px solid #eaeded; border-bottom: 1px solid #eaeded; padding: 0; text-align: left; color: #545b64; font-size: 13px; font-weight: 700; }
th div { display: flex; align-items: center; gap: 5px; padding: 0 14px 0 20px; height: 22px; border-right: 1px solid #687078; }
th .selall { padding: 0; border-color: #eaeded; }
th:last-child div { border: 0; }
.sorted { color: #16191f; }
.end { margin-left: auto; }
td { height: 40px; padding: 0 20px; border-top: 1px solid #eaeded; white-space: nowrap; }
th:first-child, td:first-child { padding: 0 0 0 19px; }
td:nth-child(2) { padding: 0; }
input[type="checkbox"] { appearance: none; width: 14px; height: 14px; border: 1px solid #687078; border-radius: 2px; background: #fff; display: block; }
.pol { display: flex; align-items: center; gap: 20px; padding-left: 24px; }
.pol > svg { color: #545b64; }
.pol span { display: flex; align-items: center; }
.pol .box { margin: 0 4px 4px 0; }
.num { border-bottom: 1px dashed #16191f; }
.boundary { margin-top: 20px; height: 80px; background: #fafafa; padding: 17px 19px; }
.boundary h2 { display: flex; align-items: center; gap: 6px; }
.boundary svg { margin-right: 2px; }
.rail { width: 40px; flex: none; border-left: 1px solid #d5dbdb; background: #fff; }
.rail button { width: 100%; height: 41px; border-bottom: 1px solid #d5dbdb; }
.rail button:last-child { border: 0; height: 40px; }
.awsfoot { height: 31px; flex: none; background: #232f3e; color: #fff; display: flex; align-items: center; gap: 26px; padding: 0 17px 0 16px; font-size: 11px; font-weight: 600; }
.awsfoot .cs { display: flex; align-items: center; gap: 5px; }
.awsfoot span { margin: 0 4px 0 auto; }

/* taskbar */
.taskbar { height: 40px; flex: none; display: flex; background: linear-gradient(90deg, #2c2a1d, #2a281c 30%, #36291f 52%, #3c2b22 65%, #2d2b1f 80%, #24231f); color: #fff; font: 14px/20px "Open Sans", sans-serif; }
.taskbar > button { width: 49px; }
.taskbar > .start { width: 48px; }
.winsearch { width: 288px; background: #f2f2f2; color: #333; display: flex; align-items: center; gap: 12px; padding-left: 12px; }
.winsearch input { flex: 1; min-width: 0; border: 0; background: none; padding: 0; }
.winsearch input::placeholder { font-style: normal; }
.winsearch svg:last-child { align-self: flex-end; }
.run { border-bottom: 3px solid #76b9ed; border-top: 3px solid transparent; }
.on { background: #5c5149; }
.amz { width: 24px; height: 24px; background: #fff; color: #111; font: 700 20px/15px "Open Sans", sans-serif; display: flex; flex-direction: column; align-items: center; }
.tray { margin-left: auto; display: flex; align-items: center; }
.tray button { width: 32px; height: 40px; }
.tray .weather { width: 150px; gap: 7px; margin: 0 19px 0 41px; font-size: 13px; }
.tray .clock { width: 62px; flex-direction: column; font-size: 12px; line-height: 18px; }
.tray .notif { width: 42px; margin-right: 12px; }
```
